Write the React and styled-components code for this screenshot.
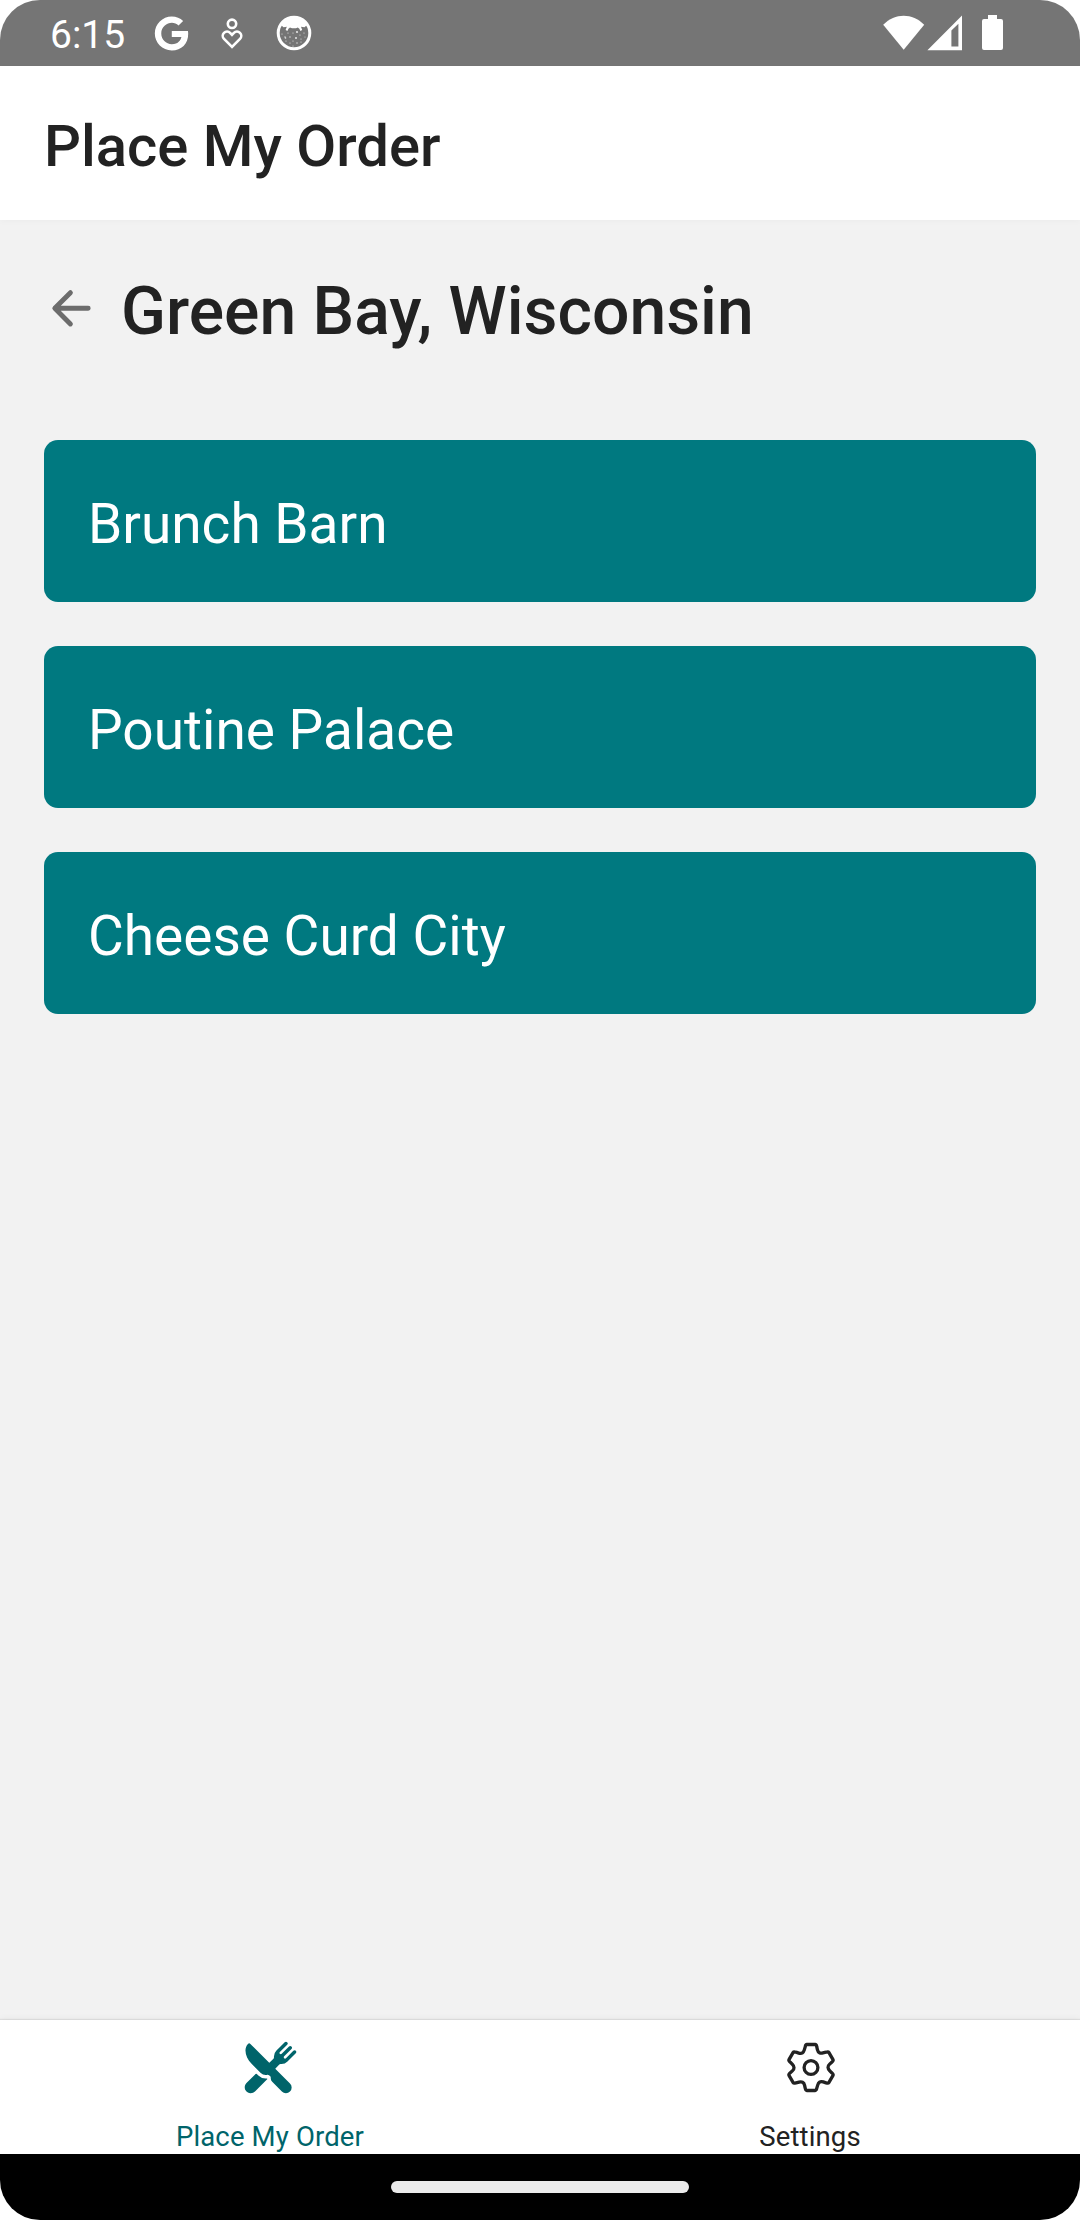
import React from "react";
import styled, { createGlobalStyle } from "styled-components";
import { FaGoogle } from "react-icons/fa";
import { IoRestaurant } from "react-icons/io5";

const GlobalStyle = createGlobalStyle`
  * { box-sizing: border-box; }
  body { margin: 0; background: #fff; }
`;

const Screen = styled.div`
  display: flex;
  flex-direction: column;
  width: 1080px;
  height: 2220px;
  overflow: hidden;
  border-radius: 40px;
  background: #f2f2f2;
  color: #222;
  font-family: Roboto, "Liberation Sans", sans-serif;
`;

const StatusBar = styled.header`
  display: flex;
  align-items: center;
  flex: none;
  height: 66px;
  padding: 0 76px 0 50px;
  background: #757575;
  color: #fff;
`;

const Clock = styled.span`
  width: 104px;
  padding-top: 3px;
  font-size: 39px;
  line-height: 66px;
`;

const StatusIcons = styled.div`
  display: flex;
  align-items: center;
  gap: ${(p) => p.$gap || 0}px;
  margin-left: ${(p) => (p.$end ? "auto" : 0)};
  svg { display: block; }
`;

const BatterySlot = styled.div`
  margin-left: 17px;
`;

const AppBar = styled.div`
  display: flex;
  align-items: center;
  flex: none;
  height: 154px;
  padding: 6px 44px 0;
  background: #fff;
  box-shadow: 0 2px 6px rgba(0, 0, 0, 0.025);
`;

const AppTitle = styled.h1`
  margin: 0;
  font-size: 58px;
  font-weight: 500;
  line-height: 76px;
`;

const Content = styled.main`
  flex: 1;
  padding: 44px 44px 0;
`;

const TitleRow = styled.div`
  display: flex;
  align-items: center;
  height: 90px;
  margin-bottom: 86px;
`;

const BackButton = styled.button`
  width: 77px;
  height: 66px;
  padding: 0;
  border: 0;
  background: none;
  color: #6c6c6c;
  svg { display: block; }
`;

const PageTitle = styled.h2`
  margin: 0;
  padding-top: 5px;
  font-size: 66px;
  font-weight: 500;
  line-height: 88px;
`;

const List = styled.div`
  display: flex;
  flex-direction: column;
  gap: 44px;
`;

const Card = styled.button`
  display: flex;
  align-items: center;
  height: 162px;
  padding: 6px 44px 0;
  border: 0;
  border-radius: 14px;
  background: #007980;
  color: #fff;
  font: 400 55px/74px Roboto, "Liberation Sans", sans-serif;
`;

const TabBar = styled.nav`
  display: flex;
  flex: none;
  height: 134px;
  background: #fff;
  box-shadow: 0 -1px 1px rgba(0, 0, 0, 0.07), 0 -1px 7px rgba(0, 0, 0, 0.05);
`;

const Tab = styled.div`
  display: flex;
  flex: 1;
  flex-direction: column;
  align-items: center;
  padding-top: 20px;
  color: ${(p) => (p.$active ? "#00646a" : "#222")};
  svg { display: block; flex: none; }
`;

const TabLabel = styled.span`
  margin-top: 24px;
  font-size: 27.5px;
  line-height: 36px;
  letter-spacing: 0.15px;
`;

const GestureBar = styled.footer`
  display: flex;
  justify-content: center;
  flex: none;
  height: 66px;
  padding-top: 27px;
  background: #000;
`;

const Handle = styled.div`
  width: 298px;
  height: 12px;
  border-radius: 6px;
  background: #ebebeb;
`;

const Wellbeing = () => (
  <svg width="22" height="35" viewBox="0 0 22 35" fill="none" stroke="#fff" strokeWidth="2.6">
    <circle cx="11" cy="7.8" r="4.2" />
    <path d="M11 30.9 3 22.9a4.3 4.3 0 0 1 6.1-6.1L11 18.9l1.9-2.1a4.3 4.3 0 0 1 6.1 6.1Z" />
  </svg>
);

const specks = [
  [6, 19, 0.6], [9, 22, 0.7], [12, 18, 0.6], [14, 22, 0.7], [10, 26, 0.6], [17, 18, 0.6],
  [17, 26, 0.6], [21, 17, 1.1], [20, 23, 1], [24, 20, 0.6], [25, 24, 0.6], [28, 18, 0.6],
  [9.5, 23, 0.8], [14, 28, 0.6], [21, 28, 0.7], [25, 27, 0.6], [29, 22, 0.5], [17, 31, 0.6],
];

const Cat = () => (
  <svg width="36" height="36" viewBox="0 0 36 36" fill="#fff">
    <circle cx="18" cy="18" r="15.8" fill="none" stroke="#fff" strokeWidth="3" />
    <path d="M5 10Q10 2 18 2t13 8L28.5 12.2 25 11.8 26.2 15 24.4 16Q23.6 13 21.8 12.4L20 13.3h-4L14 12.4Q12.2 13 11.4 16L9.6 15 10.8 11.8 7.5 12.2Z" />
    {specks.map(([x, y, r]) => (
      <circle key={`${x}-${y}`} cx={x} cy={y} r={r} opacity="0.8" />
    ))}
  </svg>
);

const Wifi = () => (
  <svg width="42" height="36" viewBox="0 0 42 36" fill="#fff">
    <path d="M0.2 9.8C12 -2.2 29.4 -2.2 41.2 9.8L20.7 34.8Z" />
  </svg>
);

const Signal = () => (
  <svg width="36" height="36" viewBox="0 0 36 36" fill="#fff" fillRule="evenodd">
    <path d="M0.4 35.2 35 0.4V35.2ZM24.4 15.6V31.4H31.4V8.8Z" />
  </svg>
);

const Battery = () => (
  <svg width="22" height="36" viewBox="0 0 22 36" fill="#fff">
    <path d="M6 0h9v4h4q2 0 2 2v27q0 2-2 2h-17q-2 0-2-2v-27q0-2 2-2h4Z" />
  </svg>
);

const BackArrow = () => (
  <svg width="66" height="66" viewBox="0 0 66 66" fill="none" stroke="currentColor" strokeWidth="4.9" strokeLinecap="round" strokeLinejoin="round">
    <path d="M44.2 32.3H11M26.4 16.7 10.8 32.3 26.4 47.9" />
  </svg>
);

// One tooth of the gear and the valley after it, turned six times round the centre.
const tooth = [
  [-5.8, -20.6], [-5.4, -23], [-4.2, -23], [4.2, -23], [5.4, -23], [5.8, -20.6],
  [6.4, -17.8], [7.1, -14.6], [9.3, -14], [11.9, -14.6],
];

const gearPath = () => {
  const turned = [0, 60, 120, 180, 240, 300].map((deg) => {
    const a = (deg * Math.PI) / 180;
    return tooth.map(([x, y]) =>
      [x * Math.cos(a) - y * Math.sin(a), x * Math.sin(a) + y * Math.cos(a)]
        .map((n) => n.toFixed(2))
        .join(" ")
    );
  });
  return turned
    .map((p, i) => `${i ? "L" : "M"}${p[0]}Q${p[1]} ${p[2]}L${p[3]}Q${p[4]} ${p[5]}L${p[6]}C${p[7]} ${p[8]} ${p[9]}`)
    .join("") + "Z";
};

const Gear = () => (
  <svg width="55" height="55" viewBox="-28 -27.5 55 55" fill="none" stroke="currentColor" strokeWidth="3.3" strokeLinejoin="round">
    <path d={gearPath()} />
    <circle r="6.9" />
  </svg>
);

const restaurants = ["Brunch Barn", "Poutine Palace", "Cheese Curd City"];

export default function App() {
  return (
    <>
      <GlobalStyle />
      <Screen>
        <StatusBar>
          <Clock>6:15</Clock>
          <StatusIcons $gap={32.3}>
            <FaGoogle size={35} />
            <Wellbeing />
            <Cat />
          </StatusIcons>
          <StatusIcons $end $gap={2}>
            <Wifi />
            <Signal />
            <BatterySlot>
              <Battery />
            </BatterySlot>
          </StatusIcons>
        </StatusBar>
        <AppBar>
          <AppTitle>Place My Order</AppTitle>
        </AppBar>
        <Content>
          <TitleRow>
            <BackButton aria-label="Back">
              <BackArrow />
            </BackButton>
            <PageTitle>Green Bay, Wisconsin</PageTitle>
          </TitleRow>
          <List>
            {restaurants.map((name) => (
              <Card key={name}>{name}</Card>
            ))}
          </List>
        </Content>
        <TabBar>
          <Tab $active>
            <IoRestaurant size={55} />
            <TabLabel>Place My Order</TabLabel>
          </Tab>
          <Tab>
            <Gear />
            <TabLabel>Settings</TabLabel>
          </Tab>
        </TabBar>
        <GestureBar>
          <Handle />
        </GestureBar>
      </Screen>
    </>
  );
}
